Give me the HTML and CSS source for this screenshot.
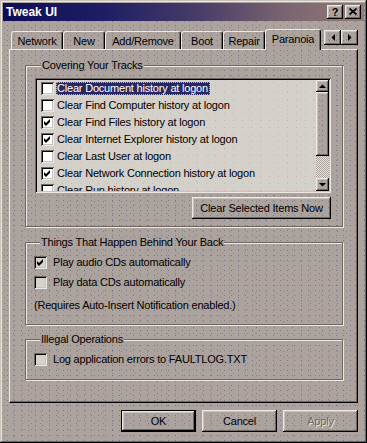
FILE: index.html
```html
<!DOCTYPE html>
<html lang="en">
<head>
    <meta charset="UTF-8">
    <meta name="viewport" content="width=device-width, initial-scale=1.0">
    <title>Tweak UI</title>
    <link rel="stylesheet" href="styles.css">
</head>
<body>
    <div class="window tex">
        <div class="titlebar">
            <span class="title">Tweak UI</span>
            <span class="tbtn raised tex">?</span>
            <span class="tbtn raised tex">
                <svg width="8" height="7" viewBox="0 0 8 7"><path d="M0.5 0.5 L7.5 6.5 M7.5 0.5 L0.5 6.5" stroke="#000" stroke-width="1.7"/></svg>
            </span>
        </div>

        <div class="content">
            <div class="tabs">
                <div class="tab tab-network">Network</div>
                <div class="tab tab-new">New</div>
                <div class="tab tab-add">Add/Remove</div>
                <div class="tab tab-boot">Boot</div>
                <div class="tab tab-repair">Repair</div>
                <div class="tab tab-paranoia active tex">Paranoia</div>
                <div class="tab-scroll">
                    <span class="arrow-btn raised tex">
                        <svg width="4" height="7" viewBox="0 0 4 7"><polygon points="4,0 4,7 0.5,3.5" fill="#000"/></svg>
                    </span>
                    <span class="arrow-btn raised tex">
                        <svg width="4" height="7" viewBox="0 0 4 7"><polygon points="0,0 0,7 3.5,3.5" fill="#000"/></svg>
                    </span>
                </div>
            </div>

            <div class="panel">
                <fieldset class="group group-tracks">
                    <legend class="tex">Covering Your Tracks</legend>
                    <div class="listbox">
                        <div class="items">
                            <div class="item"><span class="check list-check"></span><span class="label selected">Clear Document history at logon</span></div>
                            <div class="item"><span class="check list-check"></span><span class="label">Clear Find Computer history at logon</span></div>
                            <div class="item"><span class="check list-check"><svg width="13" height="13" viewBox="0 0 13 13"><polygon points="3,5 5,7 9,3 9,6 5,10 3,8" fill="#000"/></svg></span><span class="label">Clear Find Files history at logon</span></div>
                            <div class="item"><span class="check list-check"><svg width="13" height="13" viewBox="0 0 13 13"><polygon points="3,5 5,7 9,3 9,6 5,10 3,8" fill="#000"/></svg></span><span class="label">Clear Internet Explorer history at logon</span></div>
                            <div class="item"><span class="check list-check"></span><span class="label">Clear Last User at logon</span></div>
                            <div class="item"><span class="check list-check"><svg width="13" height="13" viewBox="0 0 13 13"><polygon points="3,5 5,7 9,3 9,6 5,10 3,8" fill="#000"/></svg></span><span class="label">Clear Network Connection history at logon</span></div>
                            <div class="item"><span class="check list-check"></span><span class="label">Clear Run history at logon</span></div>
                        </div>
                        <div class="scrollbar">
                            <span class="sb-btn raised tex">
                                <svg width="7" height="4" viewBox="0 0 7 4"><polygon points="0,4 7,4 3.5,0.5" fill="#000"/></svg>
                            </span>
                            <span class="sb-thumb raised tex"></span>
                            <span class="sb-track"></span>
                            <span class="sb-btn sb-down raised tex">
                                <svg width="7" height="4" viewBox="0 0 7 4"><polygon points="0,0 7,0 3.5,3.5" fill="#000"/></svg>
                            </span>
                        </div>
                    </div>
                    <div class="actions">
                        <button class="btn btn-wide raised tex">Clear Selected Items Now</button>
                    </div>
                </fieldset>

                <fieldset class="group group-back">
                    <legend class="tex">Things That Happen Behind Your Back</legend>
                    <div class="opt"><span class="check"><svg width="13" height="13" viewBox="0 0 13 13"><polygon points="3,5 5,7 9,3 9,6 5,10 3,8" fill="#000"/></svg></span>Play audio CDs automatically</div>
                    <div class="opt"><span class="check"></span>Play data CDs automatically</div>
                    <div class="note">(Requires Auto-Insert Notification enabled.)</div>
                </fieldset>

                <fieldset class="group group-illegal">
                    <legend class="tex">Illegal Operations</legend>
                    <div class="opt"><span class="check"></span>Log application errors to FAULTLOG.TXT</div>
                </fieldset>
            </div>

            <div class="footer">
                <button class="btn btn-default raised tex">OK</button>
                <button class="btn raised tex">Cancel</button>
                <button class="btn btn-disabled raised tex">Apply</button>
            </div>
        </div>
    </div>
</body>
</html>
```

FILE: styles.css
```css
* {
    box-sizing: border-box;
}
body {
    margin: 0;
    font-family: "Liberation Sans", Arial, sans-serif;
    font-size: 11px;
    letter-spacing: -0.2px;
    color: #000;
    background-color: #aca39e;
}
/* speckled desktop-theme face: single pixel dots from three offset grids */
.tex {
    background-color: #aca39e;
    background-image:
        conic-gradient(at 1px 1px, transparent 75%, rgba(96, 108, 140, 0.75) 0),
        conic-gradient(at 1px 1px, transparent 75%, rgba(96, 108, 140, 0.6) 0),
        conic-gradient(at 1px 1px, transparent 75%, rgba(120, 128, 150, 0.6) 0);
    background-size: 7px 5px, 9px 6px, 11px 8px;
    background-position: 0 0, 4px 3px, 2px 5px;
    background-attachment: fixed;
}
.raised {
    box-shadow:
        inset -1px -1px #000,
        inset 1px 1px #ece8e4,
        inset -2px -2px #6f6762,
        inset 2px 2px #c8c2bc;
}
.window {
    width: 367px;
    height: 443px;
    padding: 3px;
    box-shadow:
        inset -1px -1px #000,
        inset 1px 1px #c8c2bc,
        inset -2px -2px #6f6762,
        inset 2px 2px #ece8e4;
}
.titlebar {
    height: 18px;
    display: flex;
    align-items: center;
    padding: 0 3px;
    background: linear-gradient(90deg, #0e0e56 0%, #1e1e64 28%, #4a3e68 55%, #7a6470 78%, #947c76 100%);
}
.title {
    flex: 1;
    color: #fff;
    font-weight: bold;
    font-size: 12px;
    letter-spacing: 0;
}
.tbtn {
    width: 16px;
    height: 14px;
    display: flex;
    align-items: center;
    justify-content: center;
    font-weight: bold;
    font-size: 11px;
    padding-bottom: 1px;
}
.tbtn + .tbtn {
    margin-left: 2px;
}

.content {
    padding: 8px 6px 0 6px;
}
.tabs {
    display: flex;
    align-items: flex-end;
    height: 20px;
    padding-left: 2px;
}
.tab {
    height: 18px;
    display: flex;
    align-items: center;
    justify-content: center;
    border-top: 1px solid #ece8e4;
    border-left: 1px solid #ece8e4;
    border-right: 1px solid #000;
    border-radius: 3px 3px 0 0;
    box-shadow: inset -1px 0 #6f6762;
}
.tab.active {
    height: 21px;
    margin-bottom: -1px;
    padding-bottom: 2px;
    position: relative;
    z-index: 1;
}
.tab-network { width: 52px; }
.tab-new { width: 42px; }
.tab-add { width: 76px; }
.tab-boot { width: 42px; }
.tab-repair { width: 42px; }
.tab-paranoia { width: 56px; }
.tab-scroll {
    display: flex;
    margin-left: auto;
    align-self: flex-start;
    margin-top: 1px;
}
.arrow-btn {
    width: 17px;
    height: 15px;
    display: flex;
    align-items: center;
    justify-content: center;
}

.panel {
    height: 354px;
    border-top: 1px solid #ece8e4;
    border-left: 1px solid #ece8e4;
    border-right: 1px solid #000;
    border-bottom: 1px solid #000;
    box-shadow: inset -1px -1px #6f6762;
    padding: 9px 14px 0 15px;
}
.group {
    margin: 0;
    min-width: 0;
    border: 1px solid #6f6762;
    box-shadow: inset 1px 1px #ece8e4, 1px 1px #ece8e4;
}
.group legend {
    margin-left: 6px;
    padding: 0 1px;
    line-height: 13px;
}
.group-tracks {
    padding: 6px 11px 7px 9px;
}
.group-back {
    margin-top: 9px;
    padding: 3px 8px 9px 8px;
}
.group-illegal {
    margin-top: 8px;
    padding: 3px 8px 10px 8px;
}

.listbox {
    height: 115px;
    display: flex;
    padding: 2px;
    background-color: #d4d0ca;
    background-image:
        conic-gradient(at 1px 1px, transparent 75%, rgba(230, 150, 165, 0.7) 0),
        conic-gradient(at 1px 1px, transparent 75%, rgba(230, 150, 165, 0.5) 0);
    background-size: 9px 7px, 13px 9px;
    background-position: 0 0, 5px 4px;
    box-shadow:
        inset 1px 1px #6f6762,
        inset -1px -1px #ece8e4,
        inset 2px 2px #000,
        inset -2px -2px #c8c2bc;
}
.items {
    flex: 1;
    overflow: hidden;
}
.item {
    height: 17px;
    display: flex;
    align-items: center;
    padding-left: 4px;
    white-space: nowrap;
}
.check {
    width: 13px;
    height: 13px;
    flex: none;
    background: #d6d2cc;
    box-shadow:
        inset 1px 1px #6f6762,
        inset -1px -1px #ece8e4,
        inset 2px 2px #000,
        inset -2px -2px #c8c2bc;
}
.check svg {
    display: block;
}
.list-check {
    background: #fff;
}
.item .label {
    margin-left: 2px;
    padding: 0 2px 0 1px;
    line-height: 13px;
}
.item .label.selected {
    background: #28285e;
    color: #fff;
    outline: 1px dotted #b8b4c0;
    outline-offset: -1px;
}
.scrollbar {
    width: 13px;
    display: flex;
    flex-direction: column;
}
.sb-btn {
    height: 12px;
    display: flex;
    align-items: center;
    justify-content: center;
}
.sb-down {
    height: 13px;
}
.sb-thumb {
    height: 64px;
}
.sb-track {
    flex: 1;
    background: repeating-conic-gradient(#e4e0dc 0 25%, #aca39e 0 50%) 0 0 / 2px 2px;
}

.actions {
    display: flex;
    justify-content: flex-end;
    margin-top: 4px;
}
.btn {
    height: 22px;
    width: 75px;
    border: 0;
    padding: 0;
    font: inherit;
    letter-spacing: inherit;
    color: #000;
}
.btn-wide {
    width: 139px;
}
.btn-default {
    border: 1px solid #000;
}
.btn-disabled {
    color: #6f6762;
    text-shadow: 1px 1px #ece8e4;
}

.opt {
    height: 20px;
    display: flex;
    align-items: center;
    gap: 6px;
}
.note {
    height: 20px;
    margin-top: 3px;
    display: flex;
    align-items: center;
}

.footer {
    display: flex;
    justify-content: flex-end;
    gap: 6px;
    margin-top: 7px;
}
```
